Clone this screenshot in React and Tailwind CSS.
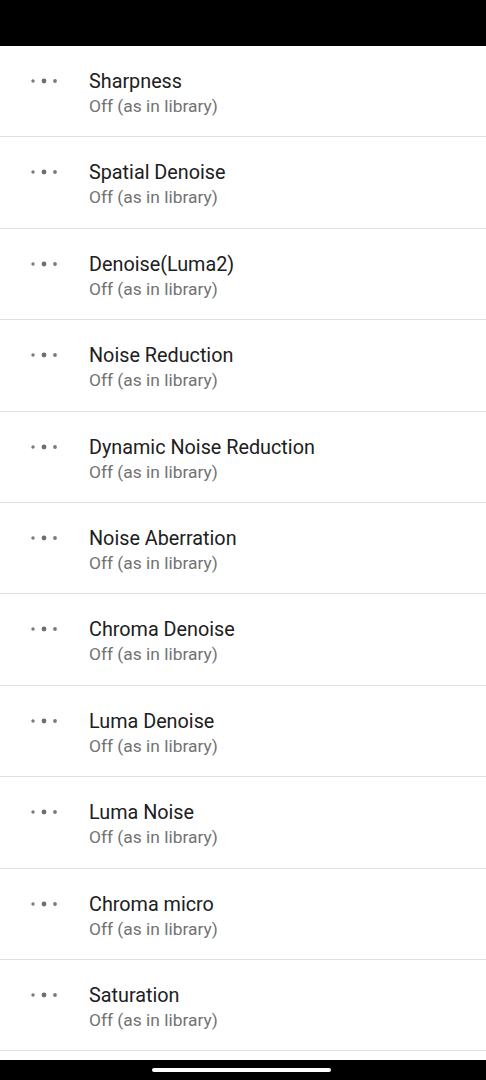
const items = [
  "Sharpness",
  "Spatial Denoise",
  "Denoise(Luma2)",
  "Noise Reduction",
  "Dynamic Noise Reduction",
  "Noise Aberration",
  "Chroma Denoise",
  "Luma Denoise",
  "Luma Noise",
  "Chroma micro",
  "Saturation",
];

const Dots = () => (
  <svg width="40" height="24" viewBox="0 0 40 24" className="shrink-0">
    <circle cx="8" cy="12" r="1.7" fill="#7a7a7a" />
    <circle cx="19" cy="12" r="2.4" fill="#6f6f6f" />
    <circle cx="30" cy="12" r="1.9" fill="#7a7a7a" />
  </svg>
);

const Row = ({ title }) => (
  <div className="h-[91.4px] shrink-0 border-b border-[#e0e0e0] flex items-start pt-[24px] pl-[25px]">
    <div className="-mt-[1px]">
      <Dots />
    </div>
    <div className="ml-[24px] flex flex-col">
      <span className="text-[19.8px] leading-6 text-[#202020]">{title}</span>
      <span className="text-[17.4px] leading-6 text-[#727272]">Off (as in library)</span>
    </div>
  </div>
);

export default function App() {
  return (
    <div
      className="w-[486px] h-[1080px] flex flex-col bg-white overflow-hidden"
      style={{ fontFamily: "Roboto, 'Noto Sans', sans-serif" }}
    >
      <div className="h-[46px] shrink-0 bg-black" />
      <div className="flex-1 flex flex-col overflow-hidden">
        {items.map((t) => (
          <Row key={t} title={t} />
        ))}
      </div>
      <div className="h-[20px] shrink-0 bg-black flex items-center justify-center pr-[4px]">
        <div className="w-[179px] h-[4px] rounded-full bg-white" />
      </div>
    </div>
  );
}
